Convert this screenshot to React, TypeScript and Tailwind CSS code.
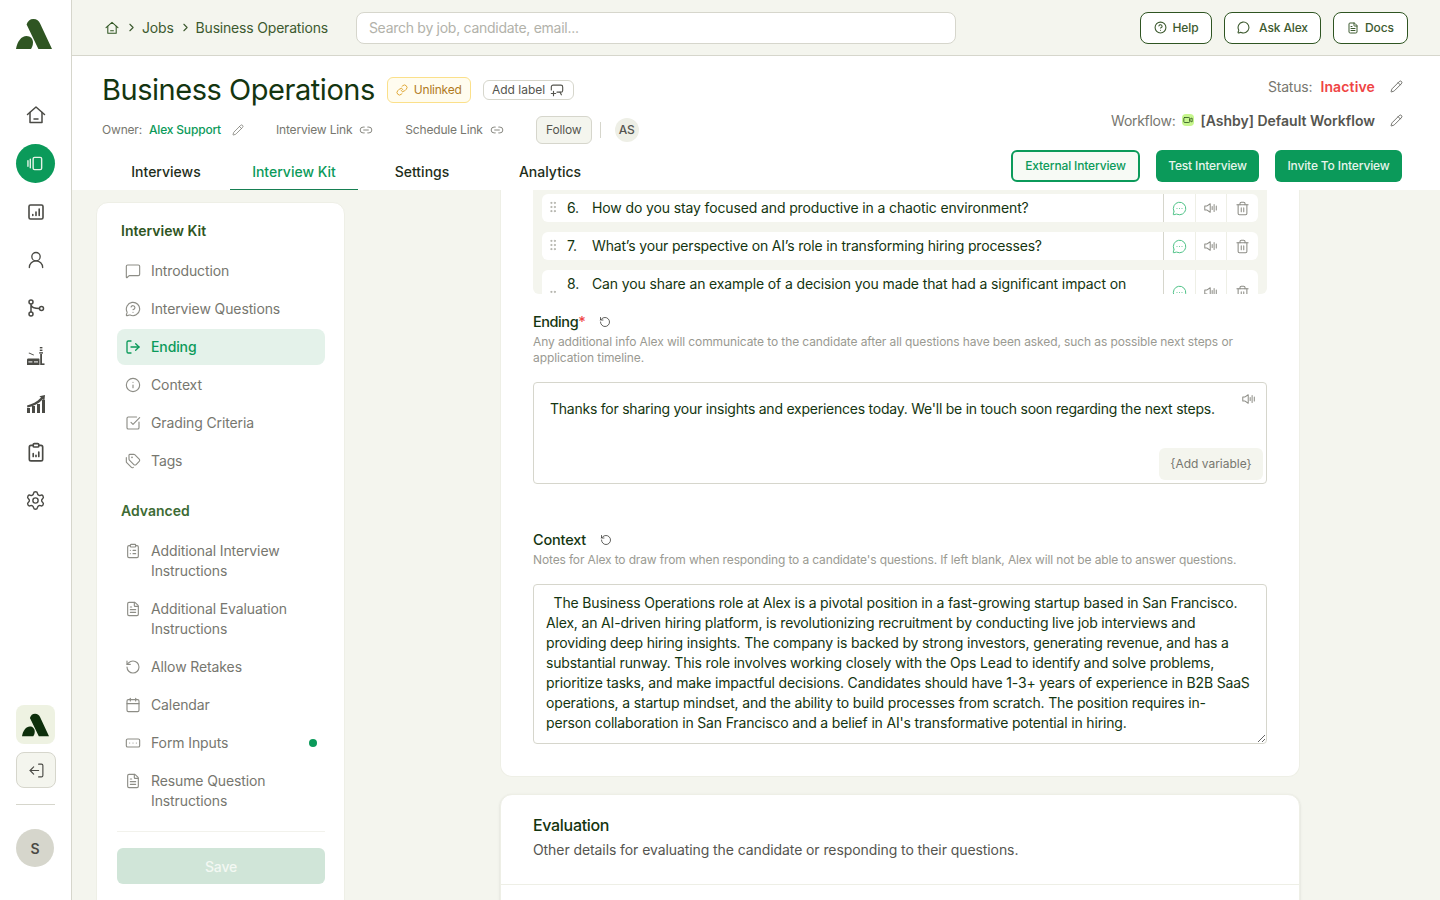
import {
  Calendar,
  ChevronRight,
  CircleHelp,
  ClipboardList,
  FileText,
  GripVertical,
  Info,
  Link,
  Link2,
  LogOut,
  MessageCircle,
  MessageCircleMore,
  MessageCircleQuestion,
  MessageSquare,
  Pencil,
  RectangleEllipsis,
  RotateCcw,
  Settings,
  SquareCheckBig,
  Tags,
  Trash2,
  UserRound,
  Video,
} from "lucide-react";

const CONTEXT_TEXT = `  The Business Operations role at Alex is a pivotal position in a fast-growing startup based in San Francisco.
Alex, an AI-driven hiring platform, is revolutionizing recruitment by conducting live job interviews and
providing deep hiring insights. The company is backed by strong investors, generating revenue, and has a
substantial runway. This role involves working closely with the Ops Lead to identify and solve problems,
prioritize tasks, and make impactful decisions. Candidates should have 1-3+ years of experience in B2B SaaS
operations, a startup mindset, and the ability to build processes from scratch. The position requires in-
person collaboration in San Francisco and a belief in AI's transformative potential in hiring.`;

const Logo = ({ className }: { className: string }) => (
  <svg viewBox="0 0 36 30" className={className} fill="currentColor">
    <path d="M10.6 5.6C11.6 2 14 0 17.4 0c3.3 0 5.6 1.8 6.8 4.8L36 30H22.4z" />
    <path d="M0 30c1.2-7.6 5.4-13 10.6-13 3.6 0 6.4 2.8 6.4 6.6 0 2.6-.8 4.8-2 6.4z" />
  </svg>
);

const HomeIcon = ({ className }: { className: string }) => (
  <svg viewBox="0 0 20 20" className={className} fill="none" stroke="currentColor" strokeWidth="1.5" strokeLinejoin="round" strokeLinecap="round">
    <path d="M1.5 9.500 10 2l8.500 7.500" />
    <path d="M4 7.500V17.500h12V7.500" />
    <path d="M8 14h4" />
  </svg>
);

const CardsIcon = ({ className }: { className: string }) => (
  <svg viewBox="0 0 18 18" className={className} fill="none" stroke="currentColor" strokeWidth="1.5" strokeLinecap="round">
    <rect x="6.500" y="2.500" width="9" height="13" rx="1.500" />
    <path d="M3.500 4.500v9M1 6v6" />
  </svg>
);

const ReportIcon = ({ className }: { className: string }) => (
  <svg viewBox="0 0 18 18" className={className} fill="none" stroke="currentColor" strokeWidth="1.6" strokeLinecap="round">
    <rect x="2" y="2" width="14" height="14" rx="1.500" />
    <path d="M5.800 12.500v-1M9 12.500V9M12.200 12.500V6" />
  </svg>
);

const BranchIcon = ({ className }: { className: string }) => (
  <svg viewBox="0 0 18 18" className={className} fill="none" stroke="currentColor" strokeWidth="1.5">
    <circle cx="4" cy="3" r="2" />
    <circle cx="4" cy="15" r="2" />
    <circle cx="14.500" cy="9.500" r="2" />
    <path d="M4 5v8M4 6c.5 2.500 3 3.500 8.500 3.500" />
  </svg>
);

const FactoryIcon = ({ className }: { className: string }) => (
  <svg viewBox="0 0 18 18" className={className} fill="currentColor">
    <path d="M0 18v-5c0-.8.5-1.400 1.300-1.400h10.200c.6 0 1 .4 1 1V18z" />
    <rect x="13.200" y="7" width="1.800" height="11" />
    <rect x="15" y="16.400" width="2.500" height="1.600" />
    <rect x="12.800" y="0" width="2.600" height="1.400" />
    <rect x="12.800" y="2.600" width="2.600" height="1.400" />
    <rect x="12.200" y="5.200" width="3.800" height="1.400" />
    <path d="M2 5.500l5 2.200-.4.8-5-2.200z" />
    <rect x="1.400" y="14.400" width="4" height="1" fill="#fff" />
    <rect x="7" y="14.400" width="4" height="1" fill="#fff" />
  </svg>
);

const GrowthIcon = ({ className }: { className: string }) => (
  <svg viewBox="0 0 20 20" className={className} fill="currentColor">
    <rect x="1" y="14" width="3" height="5" />
    <rect x="6" y="12" width="3" height="7" />
    <rect x="11" y="10" width="3" height="9" />
    <rect x="16" y="6" width="3" height="13" />
    <path d="M1 11.500C6 10.500 11 8 15 3.600l-1.600-1.400L19 1l-.6 5.800-1.600-1.600C12.400 10 7 12.600 1.400 13.400z" />
  </svg>
);

const ClipboardChartIcon = ({ className }: { className: string }) => (
  <svg viewBox="0 0 18 18" className={className} fill="none" stroke="currentColor" strokeWidth="1.5" strokeLinecap="round">
    <rect x="3" y="3" width="12" height="14" rx="1.500" />
    <rect x="6.500" y="1.500" width="5" height="3" rx="1" fill="#fff" />
    <path d="M6.500 13v-2.500M9 13v-1M11.500 13V9" />
  </svg>
);

const SpeakerIcon = ({ className }: { className: string }) => (
  <svg viewBox="0 0 18 14" className={className} fill="none" stroke="currentColor" strokeWidth="1.300" strokeLinecap="round" strokeLinejoin="round">
    <path d="M1 4.500v5h2.500L8 12.500v-11L3.500 4.500z" />
    <path d="M10.500 5v4M13 2.500v9M15.800 4.500v5" />
  </svg>
);

const AddLabelIcon = ({ className }: { className: string }) => (
  <svg viewBox="0 0 16 16" className={className} fill="none" stroke="currentColor" strokeWidth="1.300" strokeLinecap="round" strokeLinejoin="round">
    <path d="M1.500 8V4.500a2 2 0 0 1 2-2h9a2 2 0 0 1 2 2v4a2 2 0 0 1-2 2H8" />
    <path d="M4 9.500v5M1.500 12h5" />
    <path d="M11.500 10.500l1.500 3" />
  </svg>
);

const sideIcons = [
  { icon: ReportIcon, size: "size-[18px]" },
  { icon: UserRound, size: "size-[20px]" },
  { icon: BranchIcon, size: "size-[18px]" },
  { icon: FactoryIcon, size: "size-[18px]" },
  { icon: GrowthIcon, size: "size-[20px]" },
  { icon: ClipboardChartIcon, size: "size-[20px]" },
  { icon: Settings, size: "size-[21px]" },
];

const SideBar = () => (
  <aside className="flex h-full w-[72px] shrink-0 flex-col border-r border-[#d6d6cc] bg-white pl-4 pr-[16px]">
    <Logo className="mt-[19px] h-[30px] w-[36px] text-[#2f5522]" />
    <div className="mt-[47px] flex h-[38px] w-[39px] items-center justify-center text-[#4a4a45]">
      <HomeIcon className="size-[20px]" />
    </div>
    <div className="mt-[10px] flex size-[39px] items-center justify-center rounded-full bg-[#0b9a5a] text-[#e6f3e8]">
      <CardsIcon className="size-[17px]" />
    </div>
    {sideIcons.map(({ icon: Icon, size }, i) => (
      <div key={i} className={`flex h-[48px] w-[39px] items-center justify-center text-[#4a4a45] ${i === 0 ? "mt-[5px]" : ""}`}>
        <Icon className={size} strokeWidth={1.6} />
      </div>
    ))}
    <div className="mt-auto flex size-[39px] items-center justify-center rounded-lg bg-[#eef2e2]">
      <Logo className="h-[24px] w-[27px] text-[#0d2f0b]" />
    </div>
    <div className="mt-2 flex h-9 w-10 items-center justify-center rounded-lg border border-[#d6d6cc] bg-[#f4f5ee] text-[#4a4a45]">
      <LogOut className="size-[17px] -scale-x-100" strokeWidth={1.6} />
    </div>
    <div className="mt-4 border-t border-[#d6d6cc]" />
    <div className="mt-6 mb-[33px] flex size-[38px] items-center justify-center rounded-full bg-[#d6d6cc] text-[14px] font-semibold text-[#4a4a45]">
      S
    </div>
  </aside>
);

const TopButton = ({ icon, label, gap, width }: { icon: React.ReactNode; label: string; gap: string; width: string }) => (
  <div className={`flex h-8 items-center justify-center rounded-lg border border-[#2f5522] bg-white text-[12px] font-medium tracking-[-0.01em] ${gap} ${width}`}>
    {icon}
    {label}
  </div>
);

const TopBar = () => (
  <header className="flex h-14 shrink-0 items-center border-b border-[#d6d6cc] bg-[#f4f5ee] pl-[33px] pr-[32px] text-[#3d5a2f]">
    <HomeIcon className="size-[14px] text-[#2f5522]" />
    <ChevronRight className="ml-[6px] size-[13px]" />
    <span className="ml-[4px] text-[14px]">Jobs</span>
    <ChevronRight className="ml-[5px] size-[13px]" />
    <span className="ml-[4px] text-[14px]">Business Operations</span>
    <div className="ml-[28px] flex h-8 w-[600px] items-center rounded-lg border border-[#d6d6cc] bg-white px-3 text-[14px] tracking-[-0.02em] text-[#b2b2aa]">
      Search by job, candidate, email...
    </div>
    <div className="ml-auto flex gap-3">
      <TopButton icon={<CircleHelp className="size-[13px]" />} label="Help" gap="gap-[6px]" width="w-[72px]" />
      <TopButton icon={<MessageCircle className="size-[13px]" />} label="Ask Alex" gap="gap-[9px]" width="w-[97px]" />
      <TopButton icon={<FileText className="size-[12px]" />} label="Docs" gap="gap-[6px]" width="w-[75px]" />
    </div>
  </header>
);

const tabs = [
  { label: "Interviews" },
  { label: "Interview Kit", active: true },
  { label: "Settings" },
  { label: "Analytics" },
];

const TitleArea = () => (
  <section className="flex h-[134px] shrink-0 flex-col bg-white pl-[30px] pr-[38px]">
    <div className="flex justify-between">
      <div>
        <div className="mt-[14px] flex items-center">
          <h1 className="text-[29px] leading-[40px] tracking-[-0.016em] text-[#143510]">Business Operations</h1>
          <span className="ml-3 flex h-[26px] items-center gap-[6px] rounded-md border border-[#fbe08a] bg-[#fffcef] px-2 text-[12px] tracking-[-0.02em] text-[#b07a1e]">
            <Link className="size-[12px] text-[#e0a93a]" />
            Unlinked
          </span>
          <span className="ml-3 flex h-5 w-[91px] items-center justify-center gap-[5px] rounded-md border border-[#d6d6cc] text-[12px] tracking-normal text-[#55554f]">
            Add label
            <AddLabelIcon className="size-[14px]" />
          </span>
        </div>
        <div className="mt-[6px] flex items-center text-[12px] tracking-[-0.015em] text-[#77776f]">
          <span>Owner:</span>
          <span className="ml-[7px] font-medium text-[#0b9a5a]">Alex Support</span>
          <Pencil className="ml-[11px] size-[12px]" strokeWidth={1.5} />
          <span className="ml-8">Interview Link</span>
          <Link2 className="ml-[7px] size-[14px]" strokeWidth={1.5} />
          <span className="ml-8">Schedule Link</span>
          <Link2 className="ml-[7px] size-[14px]" strokeWidth={1.5} />
          <span className="ml-8 flex h-7 w-14 items-center justify-center rounded-md border border-[#d6d6cc] bg-[#f4f5ee] text-[#55554f]">Follow</span>
          <span className="ml-2 h-4 border-l border-[#d6d6cc]" />
          <span className="ml-[14px] flex size-6 items-center justify-center rounded-full bg-[#eeefe6] text-[12px] font-medium text-[#55554f]">AS</span>
        </div>
      </div>
      <div className="pt-[20px] text-[14px]">
        <div className="flex h-5 items-center justify-end text-[#77776f]">
          Status:
          <span className="ml-[8px] font-semibold tracking-[0.01em] text-[#ef4444]">Inactive</span>
          <Pencil className="-mr-px ml-[15px] size-[13px] text-[#55554f]" strokeWidth={1.5} />
        </div>
        <div className="mt-[14px] flex h-5 items-center justify-end text-[#77776f]">
          <span className="tracking-[-0.02em]">Workflow:</span>
          <span className="ml-[7px] flex size-[12px] items-center justify-center rounded-sm bg-[#c6f68d]">
            <Video className="size-[10px] text-[#2f5522]" />
          </span>
          <span className="ml-[6px] font-semibold tracking-normal text-[#55554f]">[Ashby] Default Workflow</span>
          <Pencil className="-mr-px ml-[15px] size-[13px] text-[#55554f]" strokeWidth={1.5} />
        </div>
      </div>
    </div>
    <div className="mt-auto flex items-end justify-between">
      <div className="flex">
        {tabs.map((t) => (
          <div
            key={t.label}
            className={`flex h-[37px] w-[128px] items-center justify-center border-b text-[14px] font-medium tracking-normal ${
              t.active ? "border-[#167f52] text-[#0b9a5a]" : "border-transparent text-[#1e2e1a]"
            }`}
          >
            {t.label}
          </div>
        ))}
      </div>
      <div className="mb-2 flex gap-4 text-[12px] font-medium tracking-[-0.012em]">
        <div className="flex h-8 w-[129px] items-center justify-center rounded-md border-2 border-[#0b9a5a] bg-[#f7faf5] text-[#0b9a5a]">External Interview</div>
        <div className="flex h-8 w-[103px] items-center justify-center rounded-md bg-[#0b9a5a] text-[#e8f5ec]">Test Interview</div>
        <div className="flex h-8 w-[127px] items-center justify-center rounded-md bg-[#0b9a5a] text-[#e8f5ec]">Invite To Interview</div>
      </div>
    </div>
  </section>
);

type NavItem = { icon: typeof Info; label: string; lines?: string[]; active?: boolean; dot?: boolean };

const kitItems: NavItem[] = [
  { icon: MessageSquare, label: "Introduction" },
  { icon: MessageCircleQuestion, label: "Interview Questions" },
  { icon: LogOut, label: "Ending", active: true },
  { icon: Info, label: "Context" },
  { icon: SquareCheckBig, label: "Grading Criteria" },
  { icon: Tags, label: "Tags" },
];

const advancedItems: NavItem[] = [
  { icon: ClipboardList, label: "Additional Interview", lines: ["Additional Interview", "Instructions"] },
  { icon: FileText, label: "Additional Evaluation", lines: ["Additional Evaluation", "Instructions"] },
  { icon: RotateCcw, label: "Allow Retakes" },
  { icon: Calendar, label: "Calendar" },
  { icon: RectangleEllipsis, label: "Form Inputs", dot: true },
  { icon: FileText, label: "Resume Question", lines: ["Resume Question", "Instructions"] },
];

const NavRow = ({ item }: { item: NavItem }) => {
  const Icon = item.icon;
  return (
    <div
      className={`relative flex items-start gap-[10px] rounded-lg px-2 py-2 text-[14px] leading-5 tracking-[-0.008em] ${item.lines ? "h-[56px]" : "h-9"} ${
        item.active ? "bg-[#e4f2ea] font-medium text-[#0b9a5a]" : "text-[#77776f]"
      }`}
    >
      <Icon className={`mt-[2px] size-[16px] shrink-0 ${item.active ? "" : "text-[#8d8d86]"}`} strokeWidth={item.active ? 2 : 1.7} />
      <span>
        {item.lines ? item.lines.map((l) => <div key={l}>{l}</div>) : item.label}
      </span>
      {item.dot && <span className="absolute right-2 top-[14px] size-2 rounded-full bg-[#0b9a5a]" />}
    </div>
  );
};

const KitNav = () => (
  <nav className="ml-[24px] mt-[12px] flex h-[720px] w-[249px] shrink-0 flex-col rounded-t-xl border border-[#eeefe6] bg-white pl-5 pr-[19px]">
    <h3 className="mt-[18px] pl-1 text-[14px] font-semibold leading-5 tracking-normal text-[#2f5522]">Interview Kit</h3>
    <div className="mt-[12px] flex flex-col gap-[2px]">
      {kitItems.map((item) => (
        <NavRow key={item.label} item={item} />
      ))}
    </div>
    <h3 className="mt-[22px] pl-1 text-[14px] font-semibold leading-5 tracking-normal text-[#3d6b34]">Advanced</h3>
    <div className="mt-[12px] flex flex-col gap-[2px]">
      {advancedItems.map((item) => (
        <NavRow key={item.label} item={item} />
      ))}
    </div>
    <div className="mt-3 border-t border-[#f2f2ec]" />
    <div className="mt-4 flex h-9 items-center justify-center rounded-md bg-[#d0e5d8] text-[14px] font-medium text-[#f3f8f3]">Save</div>
  </nav>
);

const questions = [
  { n: "6.", text: "How do you stay focused and productive in a chaotic environment?", tracking: "tracking-[-0.009em]" },
  { n: "7.", text: "What’s your perspective on AI’s role in transforming hiring processes?", tracking: "tracking-[-0.012em]" },
  { n: "8.", text: "Can you share an example of a decision you made that had a significant impact on", tracking: "tracking-[-0.009em]" },
];

const QuestionRow = ({ n, text, tracking, clipped }: { n: string; text: string; tracking: string; clipped?: boolean }) => (
  <div className={`flex shrink-0 rounded-md bg-white ${clipped ? "h-[44px]" : "h-7 items-stretch"}`}>
    <div className="flex w-[621px] shrink-0 items-start pt-[5px]">
      <GripVertical className={`ml-[4px] size-[14px] text-[#a8a8a0] ${clipped ? "mt-[14px]" : "mt-[1px]"}`} strokeWidth={1.5} />
      <span className="ml-[7px] w-[25px] text-[14px] leading-[18px] text-[#143510]">{n}</span>
      <span className={`truncate text-[14px] leading-[18px] text-[#143510] ${tracking}`}>{text}</span>
    </div>
    <div className="flex w-[32px] items-center justify-center border-l border-[#d6d6cc]">
      <MessageCircleMore className="size-[15px] text-[#4fc287]" strokeWidth={1.6} />
    </div>
    <div className="flex w-[31px] items-center justify-center border-l border-[#eeefe6]">
      <SpeakerIcon className="h-[12px] w-[14px] text-[#8d8d86]" />
    </div>
    <div className="flex w-[31px] items-center justify-center border-l border-[#eeefe6]">
      <Trash2 className="size-[15px] text-[#8d8d86]" strokeWidth={1.7} />
    </div>
  </div>
);

const FieldHeading = ({ label, required, gap }: { label: string; required?: boolean; gap: string }) => (
  <div className={`flex h-5 items-center text-[14.5px] font-medium text-[#143510] ${gap}`}>
    <span className={required ? "tracking-[-0.03em]" : ""}>
      {label}
      {required && <span className="text-[#ef4444]">*</span>}
    </span>
    <RotateCcw className="size-[12px] text-[#3b3b37]" strokeWidth={1.6} />
  </div>
);

const Content = () => (
  <main className="ml-[155px] w-[800px] shrink-0">
    <div className="rounded-b-xl border-x border-b border-[#eeefe6] bg-white px-8 pb-8">
      <div className="flex h-[104px] flex-col gap-[10px] overflow-hidden rounded-b-md bg-[#f4f5ee] px-[9px] pt-1">
        {questions.map((q, i) => (
          <QuestionRow key={q.n} n={q.n} text={q.text} tracking={q.tracking} clipped={i === 2} />
        ))}
      </div>
      <div className="mt-[18px]">
        <FieldHeading label="Ending" required gap="gap-[14px]" />
      </div>
      <p className="mt-[2px] text-[12px] leading-4 tracking-[-0.008em] text-[#9a9a92]">
        Any additional info Alex will communicate to the candidate after all questions have been asked, such as possible next steps or
        <br />
        application timeline.
      </p>
      <div className="relative mt-4 h-[102px] rounded border border-[#d6d6cc] px-4 pt-4 text-[14px] leading-5 tracking-[-0.017em] text-[#143510]">
        Thanks for sharing your insights and experiences today. We'll be in touch soon regarding the next steps.
        <SpeakerIcon className="absolute right-[10px] top-[10px] h-[12px] w-[14px] text-[#8d8d86]" />
        <span className="absolute bottom-[3px] right-[3px] flex h-8 w-[104px] items-center justify-center rounded-md bg-[#f4f5ee] text-[12px] tracking-normal text-[#77776f]">
          {"{Add variable}"}
        </span>
      </div>
      <div className="mt-[46px]">
        <FieldHeading label="Context" gap="gap-[14px]" />
      </div>
      <p className="mt-[2px] text-[12px] leading-4 tracking-[-0.0115em] text-[#9a9a92]">
        Notes for Alex to draw from when responding to a candidate's questions. If left blank, Alex will not be able to answer questions.
      </p>
      <textarea
        readOnly
        defaultValue={CONTEXT_TEXT}
        className="mt-4 block h-[160px] w-full resize-y overflow-hidden whitespace-pre rounded border border-[#d6d6cc] px-3 py-2 text-[14px] leading-5 tracking-[-0.012em] text-[#143510] outline-none"
      />
    </div>
    <div className="mt-[17px] rounded-t-xl border border-[#eeefe6] bg-white shadow-sm">
      <div className="border-b border-[#eeefe6] px-8 pb-6 pt-[18px]">
        <h2 className="text-[16px] font-medium leading-6 tracking-[-0.02em] text-[#143510]">Evaluation</h2>
        <p className="mt-[3px] text-[14px] leading-5 tracking-[-0.006em] text-[#55554f]">Other details for evaluating the candidate or responding to their questions.</p>
      </div>
      <div className="h-10" />
    </div>
  </main>
);

export default function App() {
  return (
    <div className="flex h-[900px] w-[1440px] overflow-hidden bg-white [font-family:Inter,sans-serif] tracking-[-0.012em]">
      <SideBar />
      <div className="flex min-w-0 flex-1 flex-col">
        <TopBar />
        <TitleArea />
        <div className="flex min-h-0 flex-1 overflow-hidden bg-[#f4f5ee]">
          <KitNav />
          <Content />
        </div>
      </div>
    </div>
  );
}
